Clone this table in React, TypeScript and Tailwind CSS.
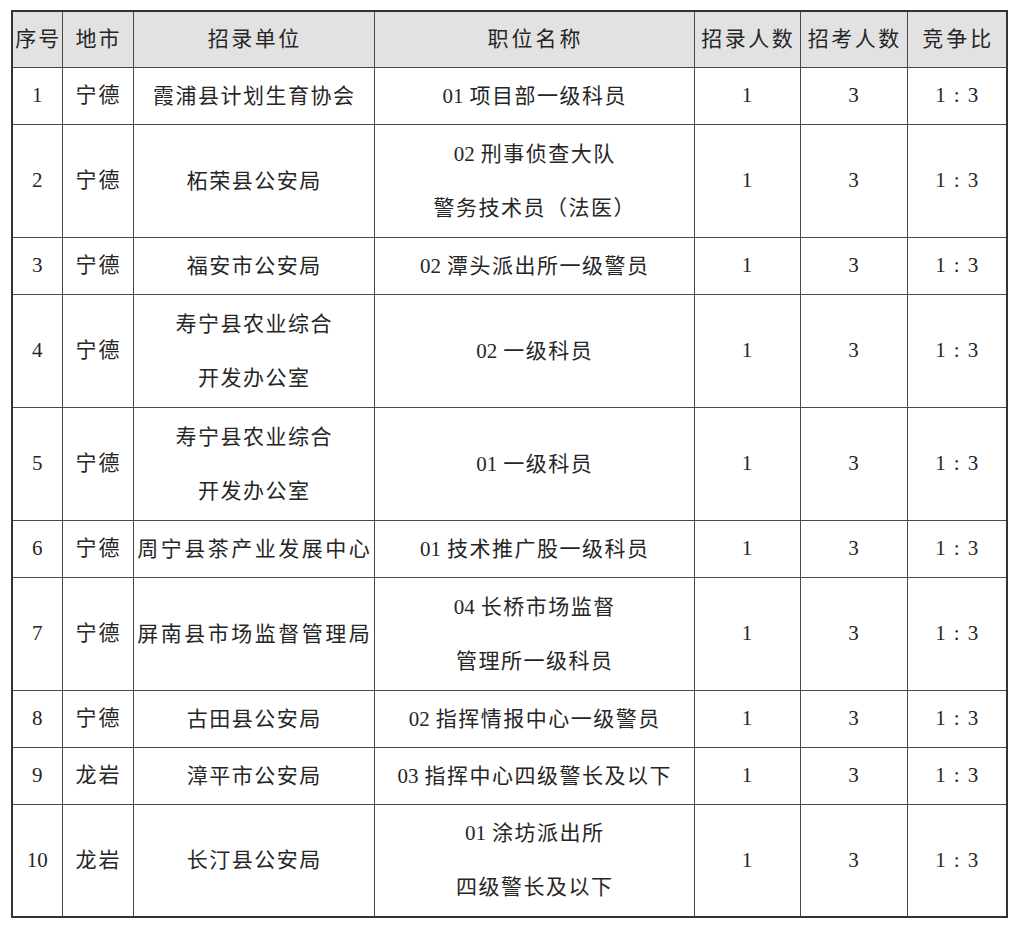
import React from "react";

type Line = { pre?: string; text: string; gap?: string };
type Row = {
  no: string;
  city: string;
  unit: Line[];
  pos: Line[];
  double: boolean;
};

const rows: Row[] = [
  { no: "1", city: "宁德", unit: [{ text: "霞浦县计划生育协会" }], pos: [{ pre: "01", text: "项目部一级科员" }], double: false },
  { no: "2", city: "宁德", unit: [{ text: "柘荣县公安局" }], pos: [{ pre: "02", text: "刑事侦查大队" }, { text: "警务技术员（法医）" }], double: true },
  { no: "3", city: "宁德", unit: [{ text: "福安市公安局" }], pos: [{ pre: "02", text: "潭头派出所一级警员" }], double: false },
  { no: "4", city: "宁德", unit: [{ text: "寿宁县农业综合" }, { text: "开发办公室" }], pos: [{ pre: "02", text: "一级科员" }], double: true },
  { no: "5", city: "宁德", unit: [{ text: "寿宁县农业综合" }, { text: "开发办公室" }], pos: [{ pre: "01", text: "一级科员" }], double: true },
  { no: "6", city: "宁德", unit: [{ text: "周宁县茶产业发展中心", gap: "gap-[2.5px]" }], pos: [{ pre: "01", text: "技术推广股一级科员" }], double: false },
  { no: "7", city: "宁德", unit: [{ text: "屏南县市场监督管理局", gap: "gap-[2.5px]" }], pos: [{ pre: "04", text: "长桥市场监督" }, { text: "管理所一级科员" }], double: true },
  { no: "8", city: "宁德", unit: [{ text: "古田县公安局" }], pos: [{ pre: "02", text: "指挥情报中心一级警员" }], double: false },
  { no: "9", city: "龙岩", unit: [{ text: "漳平市公安局" }], pos: [{ pre: "03", text: "指挥中心四级警长及以下" }], double: false },
  { no: "10", city: "龙岩", unit: [{ text: "长汀县公安局" }], pos: [{ pre: "01", text: "涂坊派出所" }, { text: "四级警长及以下" }], double: true },
];

const font = { fontFamily: '"Liberation Serif", "Noto Sans CJK SC", serif' };

const td = "border border-[#4a4a4a] text-center align-middle p-0";

function Chars({ text, gap }: { text: string; gap?: string }) {
  return (
    <span className={`inline-flex ${gap ?? "gap-[1.5px]"}`}>
      {Array.from(text).map((c, i) => (
        <span key={i}>{c}</span>
      ))}
    </span>
  );
}

function Lines({ lines }: { lines: Line[] }) {
  return (
    <div className="flex flex-col items-center leading-[54px] whitespace-nowrap">
      {lines.map((l, i) => (
        <div key={i} className="flex items-baseline">
          {l.pre && <span className="mr-[6px]">{l.pre}</span>}
          <Chars text={l.text} gap={l.gap} />
        </div>
      ))}
    </div>
  );
}

function Head({ text, gap }: { text: string; gap: string }) {
  return (
    <div className="flex justify-center whitespace-nowrap">
      <Chars text={text} gap={gap} />
    </div>
  );
}

export default function App() {
  return (
    <div className="w-[1018px] h-[930px] bg-white pl-[11px] pt-[10px]" style={font}>
      <table className="table-fixed border-collapse border-2 border-[#333] w-[995px] text-[21px] text-[#262626]">
        <colgroup>
          <col className="w-[50px]" />
          <col className="w-[71px]" />
          <col className="w-[241px]" />
          <col className="w-[320px]" />
          <col className="w-[106px]" />
          <col className="w-[107px]" />
          <col className="w-[100px]" />
        </colgroup>
        <thead>
          <tr className="h-[56px] bg-[#e2e2e2]">
            <th className={`${td} font-normal`}><Head text="序号" gap="gap-[2px]" /></th>
            <th className={`${td} font-normal`}><Head text="地市" gap="gap-[2px]" /></th>
            <th className={`${td} font-normal`}><Head text="招录单位" gap="gap-[2.5px]" /></th>
            <th className={`${td} font-normal`}><Head text="职位名称" gap="gap-[3px]" /></th>
            <th className={`${td} font-normal`}><Head text="招录人数" gap="gap-[2.5px]" /></th>
            <th className={`${td} font-normal`}><Head text="招考人数" gap="gap-[2.5px]" /></th>
            <th className={`${td} font-normal`}><Head text="竞争比" gap="gap-[3px]" /></th>
          </tr>
        </thead>
        <tbody>
          {rows.map((r) => (
            <tr key={r.no} className={r.double ? "h-[113px]" : "h-[57px]"}>
              <td className={td}>{r.no}</td>
              <td className={td}><Head text={r.city} gap="gap-[2px]" /></td>
              <td className={td}>
                <Lines lines={r.unit} />
              </td>
              <td className={td}>
                <Lines lines={r.pos} />
              </td>
              <td className={td}>1</td>
              <td className={td}>3</td>
              <td className={td}>
                <span>1</span>
                <span className="mx-[8px]">:</span>
                <span>3</span>
              </td>
            </tr>
          ))}
        </tbody>
      </table>
    </div>
  );
}
